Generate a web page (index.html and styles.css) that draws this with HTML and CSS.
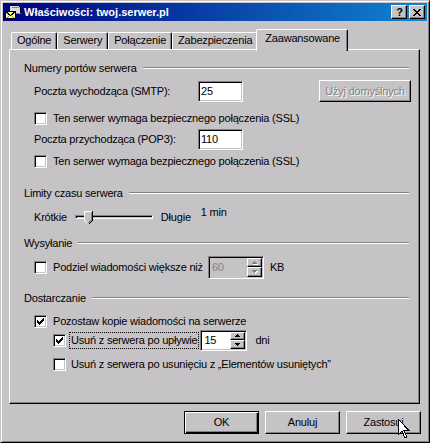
FILE: index.html
```html
<!DOCTYPE html>
<html lang="pl">
<head>
<meta charset="utf-8">
<title>Właściwości: twoj.serwer.pl</title>
<link rel="stylesheet" href="styles.css">
</head>
<body>
<div class="window">
  <div class="titlebar">
    <svg class="title-icon" width="16" height="16" viewBox="0 0 16 16" shape-rendering="crispEdges">
      <path d="M4.5 1.5h9l2 2v6h-9l-2-2z" fill="#dedbde" stroke="#000"/>
      <path d="M6.5 3.5h7" stroke="#848284"/>
      <path d="M6.5 9.5h9" stroke="#848284"/>
      <rect x="0.5" y="7.5" width="10" height="7" fill="#ffff84" stroke="#000"/>
      <path d="M0.5 7.5l5 4 5-4" fill="none" stroke="#000"/>
      <path d="M1.5 14.5l3-3M9.5 14.5l-3-3" fill="none" stroke="#848284"/>
    </svg>
    <span class="title-text">Właściwości: twoj.serwer.pl</span>
    <div class="caption-buttons">
      <div class="cap-btn cap-help">?</div>
      <div class="cap-btn">
        <svg width="8" height="7" viewBox="0 0 8 7" shape-rendering="crispEdges">
          <path d="M0 0h2v1h1v1h2v-1h1v-1h2v1h-1v1h-1v1h-1v1h1v1h1v1h1v1h-2v-1h-1v-1h-2v1h-1v1h-2v-1h1v-1h1v-1h1v-1h-1v-1h-1v-1h-1z" fill="#000"/>
        </svg>
      </div>
    </div>
  </div>

  <div class="tabs">
    <div class="tab">Ogólne</div>
    <div class="tab">Serwery</div>
    <div class="tab">Połączenie</div>
    <div class="tab">Zabezpieczenia</div>
    <div class="tab tab-active">Zaawansowane</div>
  </div>

  <div class="panel">
    <div class="group-title"><span>Numery portów serwera</span><span class="etch"></span></div>
    <div class="row row-port row-smtp">
      <span class="port-label">Poczta wychodząca (SMTP):</span>
      <div class="field field-port">25</div>
      <div class="btn btn-disabled btn-defaults">Użyj domyślnych</div>
    </div>
    <div class="row row-check row-ssl1">
      <span class="cb"></span>
      <span class="cb-label">Ten serwer wymaga bezpiecznego połączenia (SSL)</span>
    </div>
    <div class="row row-port row-pop3">
      <span class="port-label">Poczta przychodząca (POP3):</span>
      <div class="field field-port">110</div>
    </div>
    <div class="row row-check row-ssl2">
      <span class="cb"></span>
      <span class="cb-label">Ten serwer wymaga bezpiecznego połączenia (SSL)</span>
    </div>

    <div class="group-title group-timeout"><span>Limity czasu serwera</span><span class="etch"></span></div>
    <div class="row row-slider">
      <span>Krótkie</span>
      <div class="slider">
        <div class="slider-track"></div>
        <svg class="slider-thumb" width="9" height="14" viewBox="0 0 9 14" shape-rendering="crispEdges">
          <path d="M0 0h9v9l-4 4h-1l-4-4z" fill="#c6c3c6"/>
          <path d="M0.5 9V0.5h7" fill="none" stroke="#fff"/>
          <path d="M0.5 9.5l3 3" fill="none" stroke="#fff"/>
          <path d="M8.5 0v9.5l-4 4" fill="none" stroke="#000"/>
          <path d="M7.5 1v8l-3 3" fill="none" stroke="#848284"/>
        </svg>
      </div>
      <span class="slider-max">Długie</span>
      <span class="slider-value">1 min</span>
    </div>

    <div class="group-title group-send"><span>Wysyłanie</span><span class="etch"></span></div>
    <div class="row row-check row-split">
      <span class="cb"></span>
      <span class="cb-label">Podziel wiadomości większe niż</span>
      <div class="field spin-field spin-disabled spin-kb">
        <span class="spin-value">60</span>
        <div class="spin-btns">
          <div class="spin-btn"><svg width="5" height="3" viewBox="0 0 5 3" shape-rendering="crispEdges"><path d="M2 0h1v1h1v1h1v1h-5v-1h1v-1h1z"/></svg></div>
          <div class="spin-btn"><svg width="5" height="3" viewBox="0 0 5 3" shape-rendering="crispEdges"><path d="M0 0h5v1h-1v1h-1v1h-1v-1h-1v-1h-1z"/></svg></div>
        </div>
      </div>
      <span class="unit-kb">KB</span>
    </div>

    <div class="group-title group-deliver"><span>Dostarczanie</span><span class="etch"></span></div>
    <div class="row row-check row-keep">
      <span class="cb"><svg width="7" height="7" viewBox="0 0 7 7" shape-rendering="crispEdges"><path d="M0 2h1v3h-1zM1 3h1v3h-1zM2 4h1v3h-1zM3 3h1v3h-1zM4 2h1v3h-1zM5 1h1v3h-1zM6 0h1v3h-1z"/></svg></span>
      <span class="cb-label">Pozostaw kopie wiadomości na serwerze</span>
    </div>
    <div class="row row-check row-sub row-expire">
      <span class="cb"><svg width="7" height="7" viewBox="0 0 7 7" shape-rendering="crispEdges"><path d="M0 2h1v3h-1zM1 3h1v3h-1zM2 4h1v3h-1zM3 3h1v3h-1zM4 2h1v3h-1zM5 1h1v3h-1zM6 0h1v3h-1z"/></svg></span>
      <span class="cb-label focus">Usuń z serwera po upływie</span>
      <div class="field spin-field spin-days">
        <span class="spin-value">15</span>
        <div class="spin-btns">
          <div class="spin-btn"><svg width="5" height="3" viewBox="0 0 5 3" shape-rendering="crispEdges"><path d="M2 0h1v1h1v1h1v1h-5v-1h1v-1h1z"/></svg></div>
          <div class="spin-btn"><svg width="5" height="3" viewBox="0 0 5 3" shape-rendering="crispEdges"><path d="M0 0h5v1h-1v1h-1v1h-1v-1h-1v-1h-1z"/></svg></div>
        </div>
      </div>
      <span class="unit-days">dni</span>
    </div>
    <div class="row row-check row-sub row-deleted">
      <span class="cb"></span>
      <span class="cb-label">Usuń z serwera po usunięciu z „Elementów usuniętych”</span>
    </div>
  </div>

  <div class="actions">
    <div class="btn btn-default">OK</div>
    <div class="btn">Anuluj</div>
    <div class="btn">Zastosuj</div>
  </div>

  <svg class="cursor" width="12" height="20" viewBox="0 0 12 20" shape-rendering="crispEdges">
    <path d="M0.5 0.5v15l3.5-3.5 3 7 2-1-3-6.5h5z" fill="#fff" stroke="#000"/>
  </svg>
</div>
</body>
</html>
```

FILE: styles.css
```css
* { box-sizing: border-box; }

html, body {
  margin: 0;
  padding: 0;
}

body {
  width: 430px;
  height: 443px;
  overflow: hidden;
  background: #c6c3c6;
  font-family: "Liberation Sans", Arial, sans-serif;
  font-size: 11px;
  line-height: 13px;
  letter-spacing: -0.2px;
  color: #000;
}

.window {
  position: relative;
  width: 430px;
  height: 443px;
  background: #c6c3c6;
  border: 1px solid;
  border-color: #c6c3c6 #000 #000 #c6c3c6;
  box-shadow: inset 1px 1px #fff, inset -1px -1px #848284;
  padding: 2px;
  display: flex;
  flex-direction: column;
}

/* title bar */
.titlebar {
  height: 18px;
  flex: none;
  display: flex;
  align-items: center;
  padding: 0 2px 0 2px;
  background: linear-gradient(to right, #000080, #1084d0);
  color: #fff;
}

.title-icon { flex: none; display: block; }

.title-text {
  flex: 1;
  margin-left: 3px;
  font-weight: bold;
  letter-spacing: 0;
  white-space: nowrap;
}

.caption-buttons {
  display: flex;
  gap: 2px;
}

.cap-btn {
  width: 16px;
  height: 14px;
  background: #c6c3c6;
  border: 1px solid;
  border-color: #fff #000 #000 #fff;
  box-shadow: inset -1px -1px #848284;
  display: flex;
  align-items: center;
  justify-content: center;
  color: #000;
}

.cap-help {
  font-weight: bold;
  font-size: 11px;
  line-height: 12px;
  padding-left: 1px;
}

.cap-btn svg { display: block; }

/* tabs */
.tabs {
  flex: none;
  height: 20px;
  margin: 8px 0 0 6px;
  padding-left: 2px;
  display: flex;
  align-items: flex-end;
  position: relative;
  z-index: 1;
}

.tab {
  height: 17px;
  padding: 0 5px 1px 5px;
  border: 1px solid #fff;
  border-right-color: #000;
  border-bottom: none;
  border-radius: 2px 2px 0 0;
  box-shadow: inset -1px 0 #848284;
  display: flex;
  align-items: center;
  white-space: nowrap;
  background: #c6c3c6;
}

.tab-active {
  height: 22px;
  margin: 0 -2px -2px -2px;
  padding: 0 7px 4px 8px;
  position: relative;
  z-index: 2;
}

/* panel */
.panel {
  flex: none;
  height: 355px;
  margin: 0 7px 0 6px;
  border: 1px solid;
  border-color: #fff #000 #000 #fff;
  box-shadow: inset -1px -1px #848284;
  padding: 11px 10px 0 14px;
}

.group-title {
  height: 14px;
  display: flex;
  align-items: center;
  white-space: nowrap;
}

.etch {
  flex: 1;
  height: 2px;
  margin-left: 6px;
  border-top: 1px solid #848284;
  border-bottom: 1px solid #fff;
}

.group-timeout { margin-top: 17px; }
.group-send { margin-top: 11px; }
.group-deliver { margin-top: 13px; }

.row {
  display: flex;
  align-items: center;
  padding-left: 10px;
  white-space: nowrap;
}

.row-sub { padding-left: 29px; }

.row-check { height: 15px; }

.row-port { height: 22px; }
.row-smtp { margin-top: 5px; }
.row-ssl1 { margin-top: 9px; }
.row-pop3 { margin-top: 3px; height: 21px; }
.row-ssl2 { margin-top: 4px; }
.row-slider { margin-top: 9px; height: 16px; }
.row-split { margin-top: 6px; height: 22px; }
.row-keep { margin-top: 9px; }
.row-expire { margin-top: 1px; height: 20px; }
.row-deleted { margin-top: 7px; }

.port-label { width: 164px; flex: none; }

/* sunken fields */
.field {
  height: 21px;
  background: #fff;
  border: 1px solid;
  border-color: #848284 #fff #fff #848284;
  box-shadow: inset 1px 1px #000, inset -1px -1px #c6c3c6;
  padding: 0 2px;
  display: flex;
  align-items: center;
}

.field-port { width: 45px; }

/* check boxes */
.cb {
  width: 13px;
  height: 13px;
  flex: none;
  background: #fff;
  border: 1px solid;
  border-color: #848284 #fff #fff #848284;
  box-shadow: inset 1px 1px #000, inset -1px -1px #c6c3c6;
  display: flex;
  align-items: center;
  justify-content: center;
}

.cb svg { display: block; }

.cb-label { margin-left: 6px; }

.row-sub .cb-label { margin-left: 5px; }

.row-sub .focus {
  margin-left: 3px;
  padding: 1px 1px 1px 1px;
  border: 1px dotted #000;
}

/* buttons */
.btn {
  width: 75px;
  height: 23px;
  background: #c6c3c6;
  border: 1px solid;
  border-color: #fff #000 #000 #fff;
  box-shadow: inset -1px -1px #848284;
  display: flex;
  align-items: center;
  justify-content: center;
  white-space: nowrap;
}

.btn-default {
  border-color: #000;
  box-shadow: inset 1px 1px #fff, inset -1px -1px #000, inset -2px -2px #848284;
}

.btn-disabled {
  color: #848284;
  text-shadow: 1px 1px #fff;
}

.btn-defaults {
  width: 92px;
  height: 22px;
  margin-left: auto;
  margin-right: -2px;
}

.actions {
  flex: none;
  display: flex;
  justify-content: flex-end;
  gap: 6px;
  margin: 7px 6px 0 0;
}

/* slider */
.slider {
  position: relative;
  width: 78px;
  height: 16px;
  margin-left: 8px;
  display: flex;
  align-items: center;
}

.slider-track {
  width: 100%;
  height: 4px;
  border: 1px solid;
  border-color: #848284 #fff #fff #848284;
  box-shadow: inset 1px 1px #000;
}

.slider-thumb {
  position: absolute;
  left: 9px;
  top: 2px;
  display: block;
}

.slider-max { margin-left: 8px; }

.slider-value {
  margin-left: 10px;
  margin-bottom: 10px;
}

/* spin fields */
.spin-field {
  padding: 1px 1px 1px 2px;
  justify-content: space-between;
}

.spin-kb {
  width: 56px;
  height: 23px;
  margin-left: 5px;
}

.spin-days {
  width: 47px;
  height: 21px;
  margin-left: 1px;
}

.spin-disabled {
  background: #c6c3c6;
  color: #848284;
}

.spin-value { padding-left: 1px; }

.spin-btns {
  align-self: stretch;
  width: 15px;
  display: flex;
  flex-direction: column;
}

.spin-btn {
  flex: 1;
  background: #c6c3c6;
  border: 1px solid;
  border-color: #fff #000 #000 #fff;
  box-shadow: inset -1px -1px #848284;
  display: flex;
  align-items: center;
  justify-content: center;
}

.spin-btn svg { display: block; fill: #000; }

.spin-disabled .spin-btn svg {
  fill: #848284;
  filter: drop-shadow(1px 1px 0 #fff);
}

.unit-kb { margin-left: 6px; }
.unit-days { margin-left: 8px; }

/* mouse pointer over the Apply button */
.cursor {
  position: absolute;
  left: 397px;
  top: 418px;
  display: block;
}
```
